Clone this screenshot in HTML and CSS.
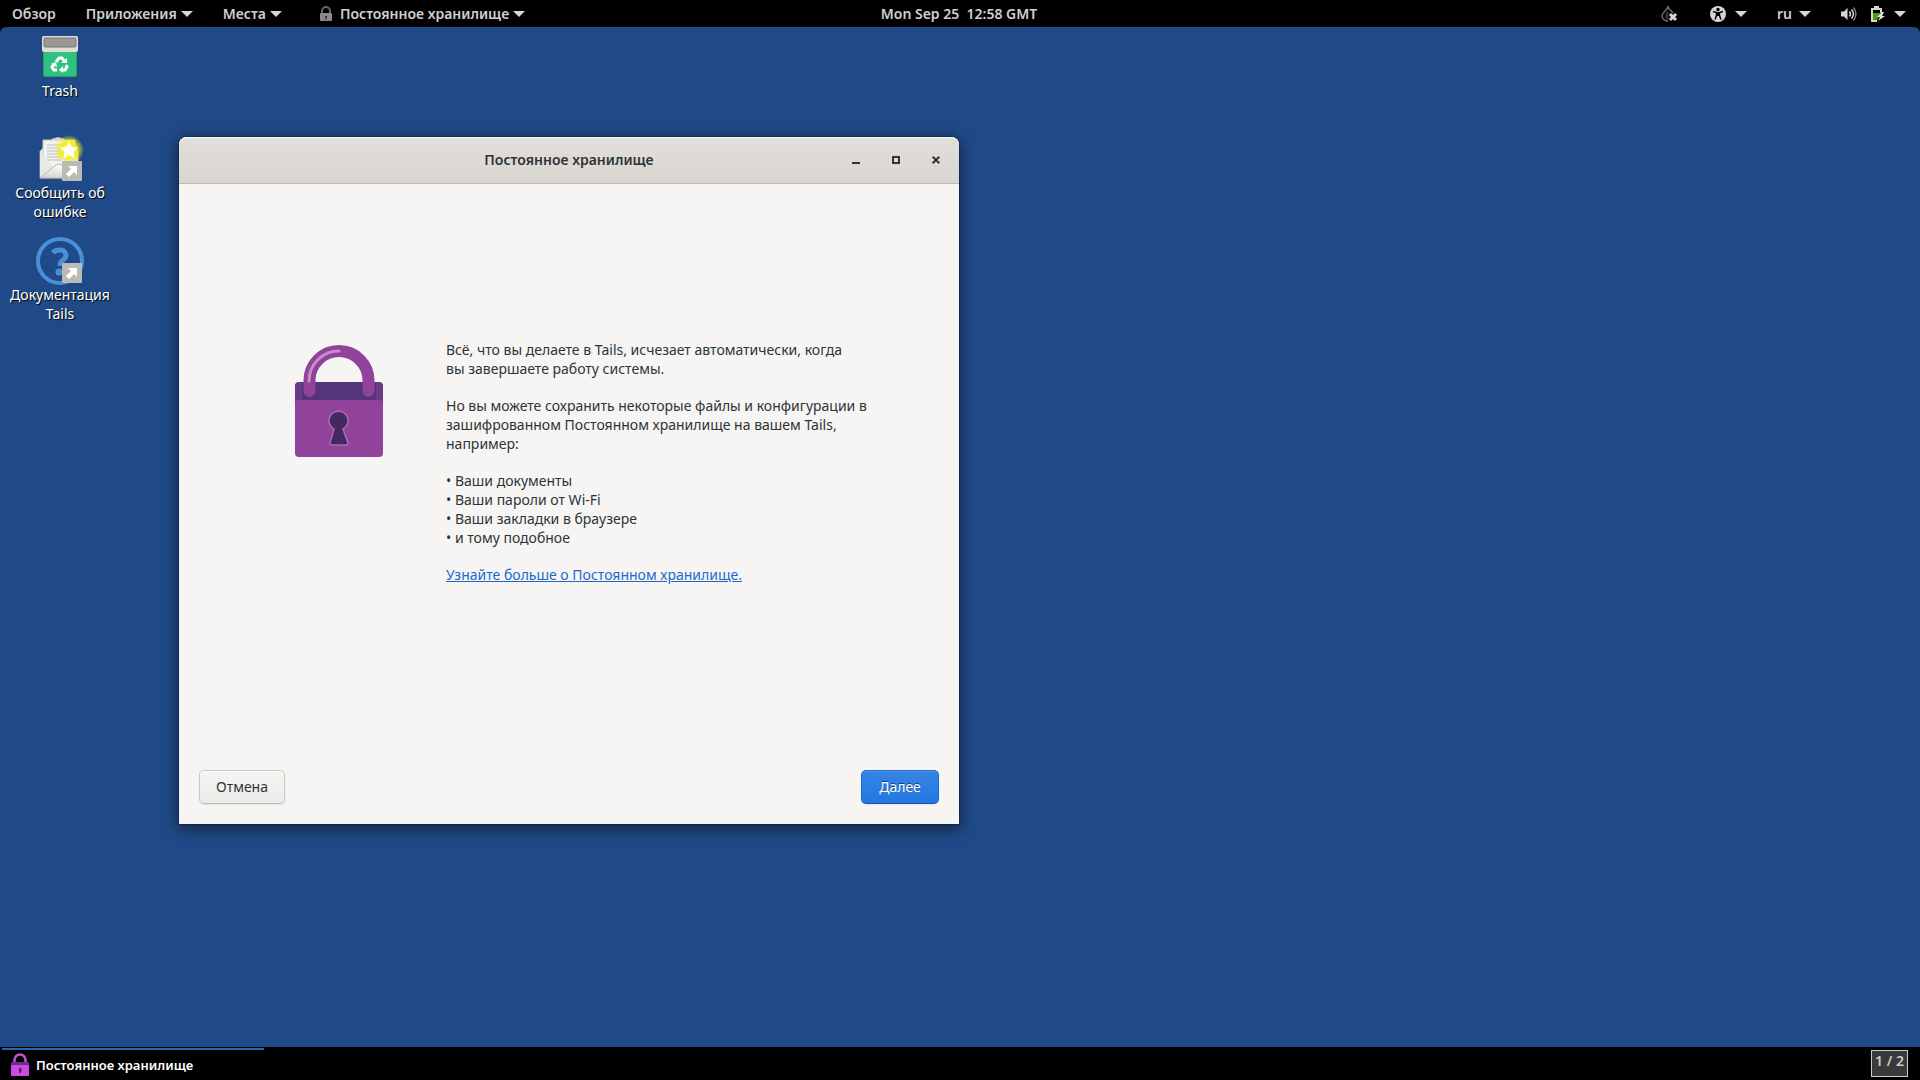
FILE: index.html
```
<!DOCTYPE html>
<html lang="ru">
<head>
    <meta charset="UTF-8">
    <meta name="viewport" content="width=device-width, initial-scale=1.0">
    <title>Постоянное хранилище</title>
    <link rel="stylesheet" href="styles.css">
</head>
<body>
    <header class="topbar">
        <nav class="topbar-left">
            <button class="panel-btn overview">Обзор</button>
            <button class="panel-btn apps">Приложения <span class="arrow"></span></button>
            <button class="panel-btn places">Места <span class="arrow"></span></button>
            <button class="panel-btn current">
                <svg class="app-lock" width="12" height="16" viewBox="0 0 12 16">
                    <path d="M2 8V5a4 4 0 0 1 8 0v3" fill="none" stroke="#666" stroke-width="2"/>
                    <rect x="0" y="7" width="12" height="8" rx="1" fill="#8a8a8a"/>
                    <path d="M5 10h2v2h-.5v2h-1v-2H5z" fill="#333"/>
                </svg>
                Постоянное хранилище <span class="arrow"></span>
            </button>
        </nav>
        <button class="panel-btn clock">Mon Sep 25&nbsp; 12:58 GMT</button>
        <div class="topbar-right">
            <button class="panel-btn tor" aria-label="Tor">
                <svg width="18" height="18" viewBox="0 0 18 18">
                    <path d="M8 1c0 5-6 5.500-6 10A5.500 5.500 0 0 0 8 16M8 1.500c0 3 4 4.500 5 6.500" fill="none" stroke="#777" stroke-width="1.300"/>
                    <path d="M8 6c-3 3-4 5-1 9l1.500 1V7z" fill="#333"/>
                    <path d="M10 9l6 6M16 9l-6 6" stroke="#d6d6d6" stroke-width="3"/>
                </svg>
            </button>
            <button class="panel-btn" aria-label="Специальные возможности">
                <svg width="16" height="16" viewBox="0 0 16 16">
                    <circle cx="8" cy="8" r="8" fill="#d6d6d6"/>
                    <circle cx="8" cy="3.500" r="1.700" fill="#000"/>
                    <path d="M3 5.500l3.500 1v3L5 13.500M13 5.500l-3.500 1v3l1.500 4" fill="none" stroke="#000" stroke-width="1.500"/>
                    <path d="M6 6h4v4H6z" fill="#000"/>
                </svg>
                <span class="arrow"></span>
            </button>
            <button class="panel-btn lang">ru <span class="arrow"></span></button>
            <button class="panel-btn system" aria-label="Система">
                <svg class="volume" width="16" height="16" viewBox="0 0 16 16">
                    <path d="M0 5.500h3L6.500 2v12L3 10.500H0z" fill="#d6d6d6"/>
                    <path d="M8.500 5.500q2 2.500 0 5M10.500 3.500q4 4.500 0 9" fill="none" stroke="#d6d6d6" stroke-width="1.500"/>
                    <path d="M12.500 1.500q5 6.500 0 13" fill="none" stroke="#888" stroke-width="1.300"/>
                </svg>
                <svg width="16" height="16" viewBox="0 0 16 16">
                    <path d="M5 0h5v2h3v5h-2V4H4v10h4v2H2V2h3z" fill="#d6d6d6"/>
                    <path d="M4 7h7v2l-3 5H4z" fill="#4e9a06"/>
                    <path d="M13 6l-5 5h3l-2 4 7-5h-3l2-4z" fill="#e4e4e4"/>
                </svg>
                <span class="arrow"></span>
            </button>
        </div>
    </header>

    <main class="desktop">
        <div class="shortcuts">
            <a class="shortcut" href="#">
                <svg width="48" height="48" viewBox="0 0 48 48">
                    <path d="M7 17h34v25a2 2 0 0 1-2 2H9a2 2 0 0 1-2-2z" fill="#26a269"/>
                    <path d="M8 17h32v24a2 2 0 0 1-2 2H10a2 2 0 0 1-2-2z" fill="#2ec27e"/>
                    <rect x="6" y="3" width="36" height="16" rx="2" fill="#deddda"/>
                    <rect x="8" y="5" width="32" height="9" rx="1" fill="#9a9996" stroke="#77767b"/>
                    <path d="M20 29l3-4h3l2 3M30 32l1 2-2 3h-3M21 37h-3l-2-3 2-3" fill="none" stroke="#fff" stroke-width="3"/>
                    <path d="M25 30h6v-5zM27 33v7l-4-3zM15 31l5-2 1 5z" fill="#fff"/>
                </svg>
                <span>Trash</span>
            </a>
            <a class="shortcut" href="#">
                <svg width="48" height="48" viewBox="0 0 48 48">
                    <defs>
                        <radialGradient id="glow">
                            <stop offset="0.500" stop-color="#f4ee1a"/>
                            <stop offset="1" stop-color="#f4ee1a" stop-opacity="0"/>
                        </radialGradient>
                        <linearGradient id="paper" x1="0" y1="0" x2="0" y2="1">
                            <stop offset="0" stop-color="#fff"/>
                            <stop offset="1" stop-color="#d5d5d3"/>
                        </linearGradient>
                    </defs>
                    <path d="M4 16L16 4q6-3 12 0l14 12v27H4z" fill="#eee" stroke="#a9a9a6"/>
                    <path d="M7 5h32v30H7z" fill="#f2f2f0" stroke="#c4c4c0"/>
                    <path d="M11 10h18M11 13h17M11 16h16M11 19h20M11 22h18M11 25h14" stroke="#bdbdb9"/>
                    <path d="M4 17l13 15L4 43zM42 17L29 32l13 11z" fill="#e8e8e6"/>
                    <path d="M4 43l16-13q3-2 6 0l16 13z" fill="url(#paper)" stroke="#b5b5b0"/>
                    <circle cx="33" cy="15" r="15" fill="url(#glow)"/>
                    <path d="M33 6l2.800 5.800 6.200.9-4.500 4.400 1.100 6.200L33 20.300l-5.600 3 1.100-6.200L24 12.700l6.200-.9z" fill="#fff"/>
                    <rect x="26" y="26" width="20" height="20" rx="1" fill="#babab7"/>
                    <path d="M32 31h9v9l-3-3-5 5-3-3 5-5z" fill="#fff"/>
                </svg>
                <span>Сообщить об ошибке</span>
            </a>
            <a class="shortcut" href="#">
                <svg width="48" height="48" viewBox="0 0 48 48">
                    <circle cx="24" cy="24" r="22" fill="none" stroke="#4a90d9" stroke-width="4"/>
                    <path d="M17 16q2-3 7-3t6 5q0 3-3 5t-3 6" fill="none" stroke="#4a90d9" stroke-width="5"/>
                    <circle cx="23" cy="35" r="3.500" fill="#4a90d9"/>
                    <rect x="26" y="26" width="20" height="20" rx="1" fill="#babab7"/>
                    <path d="M32 31h9v9l-3-3-5 5-3-3 5-5z" fill="#fff"/>
                </svg>
                <span>Документация Tails</span>
            </a>
        </div>

        <section class="window">
            <div class="titlebar">
                <h1>Постоянное хранилище</h1>
                <div class="window-controls">
                    <button aria-label="Свернуть"><svg width="8" height="8" viewBox="0 0 8 8"><path d="M0 6h8v2H0z" fill="#2e3436"/></svg></button>
                    <button aria-label="Развернуть"><svg width="8" height="8" viewBox="0 0 8 8"><path d="M1 1h6v6H1z" fill="none" stroke="#2e3436" stroke-width="2"/></svg></button>
                    <button aria-label="Закрыть"><svg width="8" height="8" viewBox="0 0 8 8"><path d="M.7.7l6.600 6.600M7.300.7L.7 7.300" stroke="#2e3436" stroke-width="2"/></svg></button>
                </div>
            </div>
            <div class="content">
                <svg class="padlock" width="88" height="113" viewBox="0 0 88 113">
                    <rect x="0" y="37" width="88" height="40" rx="4" fill="#54347a"/>
                    <path d="M4 37.500h3V56H0V41.500a4 4 0 0 1 4-4zM84 37.500h-3V56h7V41.500a4 4 0 0 0-4-4z" fill="#6c3b88"/>
                    <path d="M14.500 46V35.500a29.500 29.500 0 0 1 59 0V46" fill="none" stroke="#91429b" stroke-width="12" stroke-linecap="round"/>
                    <path d="M14 36A30 30 0 0 1 44 6" fill="none" stroke="#c28dc8" stroke-width="3" stroke-linecap="round"/>
                    <path d="M0 58q0-3 4-3h80q4 0 4 3v50q0 4-4 4H4q-4 0-4-4z" fill="#91429b"/>
                    <path d="M39 84a9.500 9.500 0 1 1 9 0l5 14q0 2-2 2H37q-2 0-2-2z" fill="#45285e" stroke="#aa6bb4" stroke-width="1.500"/>
                </svg>
                <div class="text">
                    <p>Всё, что вы делаете в Tails, исчезает автоматически, когда<br>вы завершаете работу системы.</p>
                    <p>Но вы можете сохранить некоторые файлы и конфигурации в<br>зашифрованном Постоянном хранилище на вашем Tails,<br>например:</p>
                    <ul>
                        <li>Ваши документы</li>
                        <li>Ваши пароли от Wi-Fi</li>
                        <li>Ваши закладки в браузере</li>
                        <li>и тому подобное</li>
                    </ul>
                    <p><a href="#">Узнайте больше о Постоянном хранилище.</a></p>
                </div>
            </div>
            <div class="actions">
                <button class="btn cancel">Отмена</button>
                <button class="btn next">Далее</button>
            </div>
        </section>
    </main>

    <footer class="taskbar">
        <button class="task">
            <svg width="18" height="24" viewBox="0 0 18 24">
                <path d="M3.500 11V7a5.500 5.500 0 0 1 11 0v4" fill="none" stroke="#c750d6" stroke-width="2.500"/>
                <rect x="0" y="9" width="18" height="9" rx="1" fill="#65318c"/>
                <rect x="0" y="12" width="18" height="11" rx="1" fill="#cf48df"/>
                <path d="M8 15h2.500v2.500L10 20H8.500L8 17.500z" fill="#45285e"/>
            </svg>
            Постоянное хранилище
        </button>
        <button class="workspace">1 / 2</button>
    </footer>
</body>
</html>
```
FILE: styles.css
```
* {
    box-sizing: border-box;
}

body {
    margin: 0;
    min-height: 100vh;
    display: flex;
    flex-direction: column;
    background: #000;
    color: #2e3436;
    font-family: "Noto Sans", "Open Sans", sans-serif;
    font-size: 14px;
    line-height: 19px;
}

button {
    font: inherit;
    color: inherit;
    border: none;
    background: none;
    padding: 0;
    margin: 0;
}

svg {
    display: block;
    flex-shrink: 0;
}

/* Top panel */
.topbar {
    display: grid;
    grid-template-columns: 1fr auto 1fr;
    align-items: center;
    height: 27px;
    padding: 0 14px 0 12px;
    color: #d0d0d0;
    font-weight: 600;
}

.topbar-left,
.topbar-right {
    display: flex;
    align-items: center;
}

.topbar-left {
    gap: 30px;
}

.topbar-right {
    justify-content: flex-end;
    gap: 30px;
}

.panel-btn {
    display: flex;
    align-items: center;
    gap: 4px;
    white-space: nowrap;
}

.current {
    margin-left: 8px;
}

.app-lock {
    margin-right: 4px;
}

.arrow {
    border: 6px solid transparent;
    border-top-color: #d6d6d6;
    border-bottom: none;
}

.topbar-right .panel-btn {
    gap: 9px;
}

.topbar-right .lang {
    gap: 7px;
}

.tor {
    margin-right: 2px;
}

.volume {
    margin-right: 3px;
}

/* Desktop */
.desktop {
    flex: 1;
    position: relative;
    background: #204a87;
    border-radius: 6px 6px 0 0;
}

.shortcuts {
    display: flex;
    flex-direction: column;
    width: 120px;
    padding-top: 6px;
}

.shortcut {
    display: flex;
    flex-direction: column;
    align-items: center;
    height: 102px;
    color: #fff;
    text-align: center;
    text-decoration: none;
    text-shadow: 1px 1px 1px #000;
}

.shortcut span {
    width: 104px;
}

/* Window */
.window {
    position: absolute;
    left: 179px;
    top: 110px;
    width: 780px;
    min-height: 687px;
    display: flex;
    flex-direction: column;
    background: #f6f5f4;
    border-radius: 8px 8px 0 0;
    box-shadow: 0 3px 14px 2px rgba(0, 0, 0, 0.5), 0 0 0 1px rgba(0, 0, 0, 0.2);
}

.titlebar {
    display: grid;
    grid-template-columns: 1fr auto 1fr;
    align-items: center;
    height: 47px;
    background: linear-gradient(to bottom, #e1dedb, #dad6d2);
    border-bottom: 1px solid #bfb8b1;
    border-radius: 8px 8px 0 0;
    box-shadow: inset 0 1px #f9f8f8;
}

.titlebar h1 {
    grid-column: 2;
    margin: 0;
    padding-bottom: 2px;
    font-size: 14px;
    font-weight: 600;
}

.window-controls {
    display: flex;
    justify-content: flex-end;
    gap: 16px;
    padding-right: 11px;
}

.window-controls button {
    display: grid;
    place-items: center;
    width: 24px;
    height: 24px;
}

.content {
    flex: 1;
    display: flex;
    align-items: center;
    padding: 0 60px 10px 116px;
}

.padlock {
    align-self: flex-start;
    margin-top: 161px;
    margin-right: 63px;
}

.text p,
.text ul {
    margin: 0 0 18px;
    padding: 0;
    white-space: nowrap;
}

.text p:last-child {
    margin-bottom: 0;
}

.text ul {
    list-style: none;
}

.text li::before {
    content: "• ";
}

.text a {
    color: #1b6acb;
}

.actions {
    display: flex;
    justify-content: space-between;
    padding: 20px;
}

.btn {
    height: 34px;
    border: 1px solid #cdc7c2;
    border-radius: 5px;
    padding: 0 0 2px;
    background: linear-gradient(to top, #edebe9, #f6f5f4);
    box-shadow: inset 0 1px #fff, 0 1px 2px rgba(0, 0, 0, 0.07);
}

.cancel {
    width: 86px;
    border-bottom-color: #bfb8b1;
}

.next {
    width: 78px;
    color: #fff;
    border-color: #1b6acb;
    border-bottom-color: #15539e;
    background: linear-gradient(to top, #2379e2, #3584e4);
    box-shadow: inset 0 1px #5396e8, 0 1px 2px rgba(0, 0, 0, 0.07);
    text-shadow: 0 -1px rgba(0, 0, 0, 0.5);
}

/* Bottom panel */
.taskbar {
    display: flex;
    justify-content: space-between;
    align-items: flex-start;
    height: 33px;
    padding: 1px 12px 0 2px;
}

.task {
    display: flex;
    align-items: center;
    gap: 7px;
    width: 262px;
    height: 32px;
    padding-left: 9px;
    border-top: 2px solid #256ab1;
    color: #fff;
    font-size: 13px;
    font-weight: 600;
}

.workspace {
    width: 37px;
    height: 27px;
    margin-top: 2px;
    padding-bottom: 6px;
    border: 1px solid #ccc;
    background: #3a3a3a;
    color: #ccc;
    font-weight: 600;
}
```
